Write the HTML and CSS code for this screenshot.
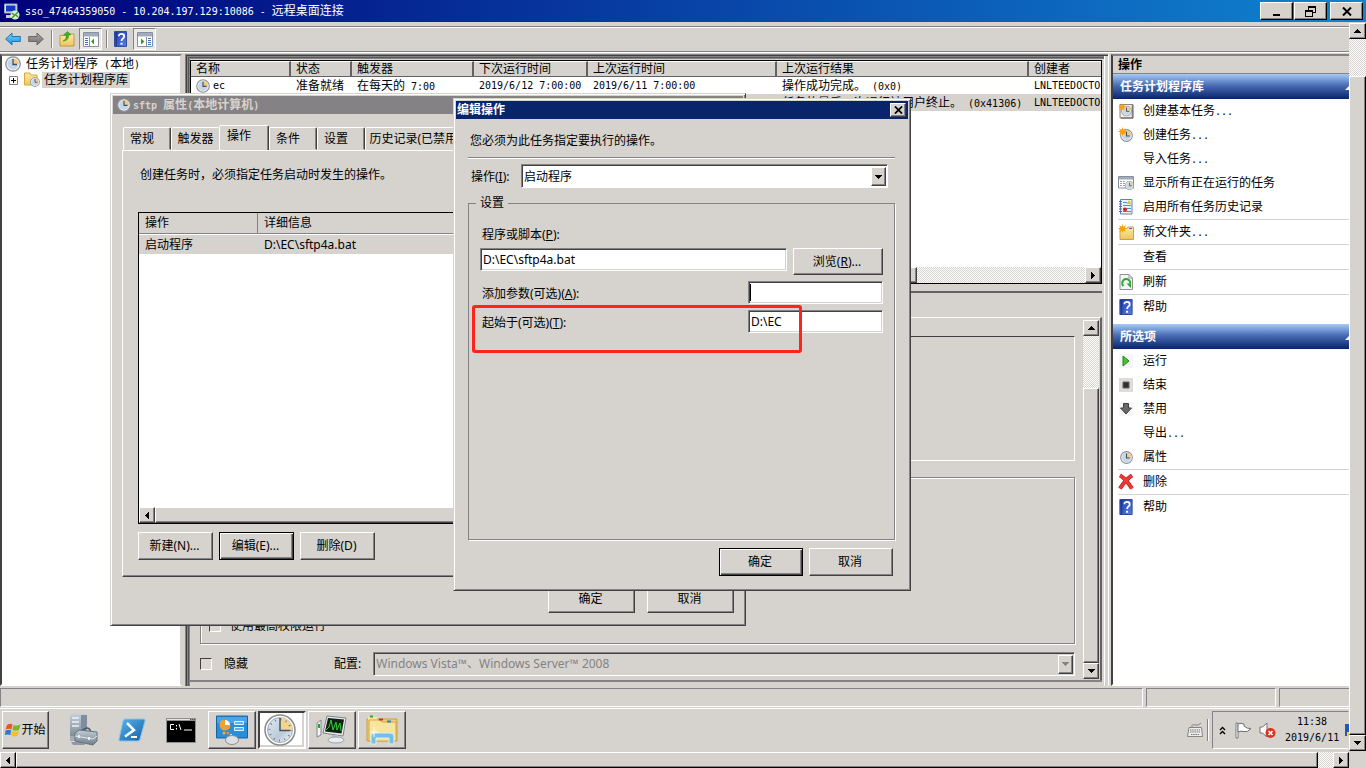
FILE: index.html
```html
<!DOCTYPE html>
<html lang="zh-CN">
<head>
<meta charset="utf-8">
<title>远程桌面连接</title>
<link rel="stylesheet" href="styles.css">
</head>
<body>
<svg class="defs" aria-hidden="true">
  <defs>
    <linearGradient id="blueG" x1="0" y1="0" x2="0" y2="1"><stop offset="0" stop-color="#7fd0f8"/><stop offset="1" stop-color="#1c8fdc"/></linearGradient>
    <linearGradient id="grayG" x1="0" y1="0" x2="0" y2="1"><stop offset="0" stop-color="#a8a8a8"/><stop offset="1" stop-color="#6e6e6e"/></linearGradient>
    <linearGradient id="helpG" x1="0" y1="0" x2="1" y2="1"><stop offset="0" stop-color="#1c3ca8"/><stop offset="1" stop-color="#5a80e4"/></linearGradient>
    <linearGradient id="foldG" x1="0" y1="0" x2="0" y2="1"><stop offset="0" stop-color="#fdeaa0"/><stop offset="1" stop-color="#ecc660"/></linearGradient>
    <linearGradient id="faceG" x1="0" y1="0" x2="1" y2="1"><stop offset="0" stop-color="#dfe9f2"/><stop offset="0.6" stop-color="#bccbd9"/><stop offset="1" stop-color="#f4f8fb"/></linearGradient>
    <linearGradient id="psG" x1="0" y1="0" x2="1" y2="1"><stop offset="0" stop-color="#5ab4ea"/><stop offset="1" stop-color="#1260a8"/></linearGradient>
    <linearGradient id="steelG" x1="0" y1="0" x2="0" y2="1"><stop offset="0" stop-color="#c3ced6"/><stop offset="1" stop-color="#6f7f8b"/></linearGradient>
    <symbol id="clock" viewBox="0 0 16 16">
      <circle cx="8" cy="8" r="7.2" fill="#f2f5f8" stroke="#8d8f92" stroke-width="1.3"/>
      <circle cx="8" cy="8" r="5.6" fill="#c5d6e6"/>
      <path d="M8 8V2.4A5.6 5.6 0 0 1 13.6 8Z" fill="#f4ca78"/>
      <path d="M8 3V8.5H12" fill="none" stroke="#39506e" stroke-width="1.3"/>
    </symbol>
    <symbol id="star" viewBox="0 0 10 10"><path d="M5 0 6 3 9 1.500 7.500 4 10 5 7.500 6 8.500 9 6 7.500 5 10 4 7.500 1.500 9 2.500 6 0 5 2.500 4 1 1.500 4 3Z" fill="#f8a010"/></symbol>
    <symbol id="help" viewBox="0 0 14 17"><path d="M0.500 0.500H13.500V16.500H0.500Z" fill="url(#helpG)" stroke="#23409c"/><path d="M2.500 1V16" stroke="#183080"/><path d="M5.200 5.500C5.200 2 11 2.200 11 5.500C11 7.800 8.100 8 8.100 10.700" fill="none" stroke="#fff" stroke-width="1.900"/><path d="M7 12.500H9.200V14.600H7Z" fill="#fff"/></symbol>
    <symbol id="up" viewBox="0 0 7 4"><path d="M3 0H4V1H5V2H6V3H7V4H0V3H1V2H2V1H3Z"/></symbol>
    <symbol id="down" viewBox="0 0 7 4"><path d="M0 0H7V1H6V2H5V3H4V4H3V3H2V2H1V1H0Z"/></symbol>
    <symbol id="left" viewBox="0 0 4 7"><path d="M4 0V7H3V6H2V5H1V4H0V3H1V2H2V1H3V0Z"/></symbol>
    <symbol id="right" viewBox="0 0 4 7"><path d="M0 0V7H1V6H2V5H3V4H4V3H3V2H2V1H1V0Z"/></symbol>
    <symbol id="cross" viewBox="0 0 10 9"><path d="M1 0.500 9 8.500M9 0.500 1 8.500" stroke="#000" stroke-width="2"/></symbol>
  </defs>
</svg>

<header class="rdp-title">
  <svg width="16" height="17" viewBox="0 0 16 17"><path d="M0.500 1H13V10H0.500Z" fill="#e4e8f0" stroke="#98a4b8"/><path d="M2 2.500H11.500V8.500H2Z" fill="#1438c0"/><path d="M2 15V12H8V15Z" fill="#c8ccd4"/><circle cx="11" cy="12" r="4.500" fill="#e0ecd8"/><path d="M8 10 10.500 12.500 8 15M14 9 11.500 11.500 14 14" fill="none" stroke="#2c9c24" stroke-width="1.400"/></svg>
  <h1><span class="mono">sso_47464359050 - 10.204.197.129:10086 - </span>远程桌面连接</h1>
  <button class="raised" aria-label="最小化"><svg width="8" height="10"><path d="M0 8H7V10H0Z"/></svg></button>
  <button class="raised" aria-label="还原"><svg width="11" height="11"><path d="M3 0H11V7H8V6H10V2H4V4H3ZM0 4H8V11H0ZM1 6V10H7V6Z" fill-rule="evenodd"/></svg></button>
  <button class="raised close" aria-label="关闭"><svg width="10" height="9"><use href="#cross"/></svg></button>
</header>

<div class="viewport">
<main class="session">
  <nav class="toolbar">
    <button aria-label="后退"><svg width="16" height="14" viewBox="0 0 16 14"><path d="M0.700 7 7 1V4.500H15.300V9.500H7V13Z" fill="url(#blueG)" stroke="#1876b4"/></svg></button>
    <button class="fwd" aria-label="前进"><svg width="16" height="14" viewBox="0 0 16 14"><path d="M15.300 7 9 1V4.500H0.700V9.500H9V13Z" fill="url(#grayG)" stroke="#686868"/></svg></button>
    <i class="bar"></i>
    <button aria-label="向上"><svg width="16" height="16" viewBox="0 0 16 16"><path d="M1 4.500H8L9 3H15V15H1Z" fill="url(#foldG)" stroke="#c09840"/><path d="M4 10C7 9 7.500 6 7 4H4.500L8.500 0.500 12 4H9.500C10 7 8 10 4 10Z" fill="#40b020" stroke="#2c8414" stroke-width=".5"/></svg></button>
    <button class="on" aria-label="显示树"><svg width="16" height="15" viewBox="0 0 16 15"><path d="M0.500 0.500H15.500V14.500H0.500Z" fill="#fff" stroke="#8890a0"/><path d="M1 1H15V4.500H1Z" fill="#a0acbc"/><path d="M2 6.500H5M2 8.500H5M2 10.500H5M2 12.500H5" stroke="#3c70b8"/><path d="M6.500 5V14" stroke="#8890a0"/><path d="M11 6.500V12.500L8 9.500Z" fill="#30a020"/></svg></button>
    <i class="bar"></i>
    <button class="q" aria-label="帮助"><svg width="13" height="16"><use href="#help"/></svg></button>
    <button class="on" aria-label="显示操作窗格"><svg width="16" height="15" viewBox="0 0 16 15"><path d="M0.500 0.500H15.500V14.500H0.500Z" fill="#fff" stroke="#8890a0"/><path d="M1 1H15V4.500H1Z" fill="#a0acbc"/><path d="M11 6.500H14M11 8.500H14M11 10.500H14M11 12.500H14" stroke="#3c70b8"/><path d="M9.500 5V14" stroke="#8890a0"/><path d="M4 6.500V12.500L7.500 9.500Z" fill="#30a020"/></svg></button>
  </nav>

  <div class="panes">
    <aside class="tree">
      <div class="node"><svg width="16" height="16"><use href="#clock"/></svg><span>任务计划程序<b class="mono"> (</b>本地<b class="mono">)</b></span></div>
      <div class="node child"><svg width="9" height="9" viewBox="0 0 9 9"><path d="M0.500 0.500H8.500V8.500H0.500Z" fill="#fff" stroke="#848284"/><path d="M2 4.500H7M4.500 2V7" stroke="#000"/></svg><svg class="ico" width="16" height="16" viewBox="0 0 16 16"><path d="M0.500 1H6L7 3H13V13H0.500Z" fill="url(#foldG)" stroke="#d8a840"/><svg x="6" y="5" width="10" height="10"><use href="#clock"/></svg></svg><span class="sel">任务计划程序库</span></div>
    </aside>

    <section class="center">
      <div class="list">
        <table>
          <colgroup><col class="c1"><col class="c2"><col class="c3"><col class="c4"><col class="c5"><col class="c6"><col></colgroup>
          <thead><tr><th>名称</th><th>状态</th><th>触发器</th><th>下次运行时间</th><th>上次运行时间</th><th>上次运行结果</th><th>创建者</th></tr></thead>
          <tbody>
            <tr><td><div class="name"><svg width="14" height="14"><use href="#clock"/></svg><span class="mono">ec</span></div></td><td>准备就绪</td><td>在每天的<span class="mono"> 7:00</span></td><td class="mono">2019/6/12 7:00:00</td><td class="mono">2019/6/11 7:00:00</td><td>操作成功完成。<span class="mono"> (0x0)</span></td><td class="mono">LNLTEEDOCTO</td></tr>
            <tr class="picked"><td><div class="name"><svg width="14" height="14"><use href="#clock"/></svg></div></td><td></td><td></td><td></td><td></td><td>任务的最后一次运行被用户终止。<span class="mono"> (0x41306)</span></td><td class="mono">LNLTEEDOCTO</td></tr>
          </tbody>
        </table>
        <div class="hscroll"><button class="raised" aria-label="左"><svg width="4" height="7"><use href="#left"/></svg></button><div class="raised thumb part"></div><div class="track"></div><button class="raised" aria-label="右"><svg width="4" height="7"><use href="#right"/></svg></button></div>
      </div>
      <div class="detail">
        <div class="page">
          <div class="form">
            <div class="box first"></div>
            <div class="box second"><label class="check"><input type="checkbox" disabled>使用最高权限运行</label></div>
            <div class="conf"><label class="check"><input type="checkbox" disabled>隐藏</label><label class="lab" for="conf">配置:</label><div class="combo off"><select id="conf" disabled><option>Windows Vista™、Windows Server™ 2008</option></select><i class="raised"><svg width="7" height="4"><use href="#down"/></svg></i></div></div>
          </div>
          <div class="vscroll"><button class="raised" aria-label="上"><svg width="7" height="4"><use href="#up"/></svg></button><div class="track gap"></div><div class="raised thumb"></div><button class="raised" aria-label="下"><svg width="7" height="4"><use href="#down"/></svg></button></div>
        </div>
      </div>
    </section>

    <aside class="actions">
      <h2>操作</h2>
      <h3>任务计划程序库<svg width="8" height="6"><path d="M0 6 6 0 8 2V6Z" fill="#fff"/></svg></h3>
      <ul>
        <li><svg width="16" height="16" viewBox="0 0 16 16"><path d="M2 1.500H15V15H2Z" fill="#eee" stroke="#8a8484"/><path d="M14.500 2V15H3" fill="none" stroke="#807878" stroke-width="1.500"/><svg x="3" y="2.500" width="11" height="11"><use href="#clock"/></svg><svg width="8" height="8"><use href="#star"/></svg></svg><span>创建基本任务<span class="mono">...</span></span></li>
        <li><svg width="16" height="16" viewBox="0 0 16 16"><svg x="2" y="2" width="13" height="13"><use href="#clock"/></svg><svg width="9" height="9"><use href="#star"/></svg></svg><span>创建任务<span class="mono">...</span></span></li>
        <li class="plain"><span>导入任务<span class="mono">...</span></span></li>
        <li><svg width="16" height="16" viewBox="0 0 16 16"><path d="M0.500 1.500H15.500V13H0.500Z" fill="#fff" stroke="#8890a0"/><path d="M1 2H15V4.500H1Z" fill="#a0acbc"/><path d="M2 6.500H8M2 8.500H7M2 10.500H7" stroke="#a0a0b0" stroke-dasharray="2 1"/><svg x="7" y="6" width="9" height="9"><use href="#clock"/></svg></svg>显示所有正在运行的任务</li>
        <li><svg width="16" height="16" viewBox="0 0 16 16"><path d="M2.500 0.500H14V15H2.500Z" fill="#e8f2fc" stroke="#5c84b8"/><path d="M1 2.500H4M1 5H4M1 7.500H4M1 10H4M1 12.500H4" stroke="#606878"/><path d="M5 3.500H9M5 6.500H13M5 9.500H13M5 12.500H13" stroke="#4c90d8"/><path d="M8.500 5 11 1 13.500 5Z" fill="#f4c010"/><circle cx="7" cy="10.500" r="2" fill="#d42020"/></svg>启用所有任务历史记录</li>
        <li class="line"><svg width="16" height="16" viewBox="0 0 16 16"><path d="M2 4.500H9L10 3H15.500V15.500H2Z" fill="url(#foldG)" stroke="#d0a040"/><path d="M11 4.500H14" stroke="#3878d0"/><svg width="9" height="9"><use href="#star"/></svg></svg><span>新文件夹<span class="mono">...</span></span></li>
        <li class="line plain">查看</li>
        <li class="line"><svg width="16" height="16" viewBox="0 0 16 16"><path d="M2 0.500H11L14.500 4V15.500H2Z" fill="#f4f6f8" stroke="#909090"/><path d="M11 0.500V4H14.500" fill="none" stroke="#a0a0a0"/><path d="M5.500 12A4 4 0 1 1 11 12" fill="none" stroke="#30a838" stroke-width="2"/><path d="M8.500 9.500H13V14Z" fill="#30a838"/></svg>刷新</li>
        <li class="line"><svg width="16" height="16"><use href="#help"/></svg>帮助</li>
      </ul>
      <h3>所选项<svg width="8" height="6"><path d="M0 6 6 0 8 2V6Z" fill="#fff"/></svg></h3>
      <ul>
        <li><svg width="16" height="16" viewBox="0 0 16 16"><path d="M1 1H15V15H1Z" fill="#f6f6f6"/><path d="M5 3V13L11 8Z" fill="#48c030" stroke="#208c18"/></svg>运行</li>
        <li><svg width="16" height="16" viewBox="0 0 16 16"><path d="M1 1H15V15H1Z" fill="#dedcda"/><path d="M5 5H11V11H5Z" fill="#303030" stroke="#606060"/></svg>结束</li>
        <li><svg width="16" height="16" viewBox="0 0 16 16"><path d="M1 1H15V15H1Z" fill="#f6f6f6"/><path d="M5.500 2.500H10.500V7H13.500L8 13 2.500 7H5.500Z" fill="#686868" stroke="#404040"/></svg>禁用</li>
        <li class="plain"><span>导出<span class="mono">...</span></span></li>
        <li><svg width="16" height="16" viewBox="0 0 16 16"><svg x="2" y="2" width="13" height="13"><use href="#clock"/></svg></svg>属性</li>
        <li class="line"><svg width="16" height="16" viewBox="0 0 16 16"><path d="M2 1.500Q7 4 14 14.500M14 1.500Q8 5 2 14.500" fill="none" stroke="#a81414" stroke-width="4"/><path d="M2 1.500Q7 4 14 14.500M14 1.500Q8 5 2 14.500" fill="none" stroke="#f03838" stroke-width="2.800"/></svg>删除</li>
        <li class="line"><svg width="16" height="16"><use href="#help"/></svg>帮助</li>
      </ul>
    </aside>
  </div>

  <div class="status"><i></i><i></i><i></i></div>

  <footer class="taskbar">
    <button class="raised start"><svg width="16" height="14" viewBox="0 0 16 14"><path d="M2 2Q5 0 7.500 1.500L6.500 6.500Q4 5 0.500 6.500Z" fill="#e85820"/><path d="M8.500 2Q11 3.500 15.500 1.500L14 7Q11 8.500 7.500 7Z" fill="#78b828"/><path d="M0.500 7.500Q4 6 6.300 7.500L5.300 12Q3 11 0 12Z" fill="#3078d0"/><path d="M7.300 8Q10.500 9.500 13.800 8L12.500 13Q9 14 6 12.500Z" fill="#f4c020"/></svg>开始</button>
    <button class="quick" aria-label="服务器管理器"><svg width="32" height="32" viewBox="0 0 32 32"><path d="M3 2 5 0H20V25L18 27H3Z" fill="url(#steelG)"/><path d="M14 1H20V24H14Z" fill="#7d8f9e"/><path d="M5 4H12M5 8H12M5 12H12" stroke="#eef4f8" stroke-width="1.500"/><path d="M3 22H17V27H3Z" fill="#a3adb5"/><path d="M4 28H16L18 31H6Z" fill="#8d9aa5"/><path d="M14 18Q21 10 24 18" fill="none" stroke="#4d5861" stroke-width="1.500"/><path d="M8 19 12 16 30 18V27L26 31 8 27Z" fill="url(#steelG)" stroke="#63717d"/><path d="M8 22 26 25 30 22" fill="none" stroke="#e0e6ea"/><path d="M12 21V24M22 23V26" stroke="#e8ecef" stroke-width="2"/></svg></button>
    <button class="quick" aria-label="PowerShell"><svg width="28" height="24" viewBox="0 0 28 24"><path d="M7 1H26Q27.500 1 27 3L22 21Q21.500 23 20 23H2Q0.500 23 1 21L5 3Q5.500 1 7 1Z" fill="url(#psG)" stroke="#8cc4ec"/><path d="M9 5 16 12 7 18.500" fill="none" stroke="#fff" stroke-width="2.500"/><path d="M13 19H19" stroke="#fff" stroke-width="2"/></svg></button>
    <button class="quick" aria-label="命令提示符"><svg width="30" height="25" viewBox="0 0 30 25"><path d="M0 0H30V25H0Z" fill="#909090"/><path d="M1 3H29V24H1Z"/><path d="M1 1H24V2H1Z" fill="#e4e4e4"/><path d="M24 1.500H29" stroke="#505050" stroke-dasharray="1 1"/><path d="M8 6.500H4.500V11.500H8M10.500 7V8.500M10.500 10V11.500M13 6 15 12M18 12H26" fill="none" stroke="#fff"/></svg></button>
    <button class="raised task" aria-label="控制面板"><svg width="32" height="30" viewBox="0 0 32 30"><path d="M0.500 1H31.500V23H0.500Z" fill="#2c8cd4" stroke="#1464a4"/><path d="M1 2H31V8H1Z" fill="#4ca4e4"/><circle cx="9" cy="10" r="5" fill="#fff"/><path d="M9 10V4.500A5.500 5.500 0 1 0 14.500 10Z" fill="#f0a030"/><path d="M18.500 6.500H27.500V9.500H18.500ZM18.500 12.500H27.500V15.500H18.500Z" fill="#58b4f0" stroke="#e4f4ff"/><circle cx="8" cy="18" r="1.500" fill="#f0b040"/><circle cx="12" cy="18" r="1.500" fill="#e8884c"/><path d="M15 19V24" stroke="#ddd" stroke-width="2"/><ellipse cx="16" cy="25" rx="6.500" ry="4.500" fill="#dde0e2" stroke="#888c90"/></svg></button>
    <button class="pressed task" aria-label="任务计划程序"><svg width="32" height="32" viewBox="0 0 32 32"><circle cx="16" cy="16" r="15" fill="#fff" stroke="#888c90" stroke-width="1.500"/><circle cx="16" cy="16" r="12.500" fill="url(#faceG)" stroke="#a4acb4"/><path d="M16 16V3.500A12.500 12.500 0 0 1 28.500 16Z" fill="#f4d490"/><circle cx="16" cy="16" r="10.500" fill="none" stroke="#65788c" stroke-width="2" stroke-dasharray="1 4.500"/><path d="M16 4V16.500H26" fill="none" stroke="#44586c" stroke-width="1.500"/></svg></button>
    <button class="raised task" aria-label="资源监视器"><svg width="32" height="30" viewBox="0 0 32 30"><path d="M1 8 5 5V20L1 22Z" fill="#f4f4f4" stroke="#80868c"/><path d="M3 9V13" stroke="#2ca020" stroke-width="2"/><path d="M11 1 30 3 27 21 7 18Z" fill="#e8ecf0" stroke="#7c848c"/><path d="M12 3 28 4.500 25.500 18.500 9 16.500Z" fill="#102010"/><path d="M10 15 13 12 15 5 17 15 20 7 21 15 24 8 25 16" fill="none" stroke="#28d038"/><path d="M16 20H22V24H16Z" fill="#b4bcc4"/><ellipse cx="20" cy="25" rx="8" ry="3" fill="#e8ecf0" stroke="#9ca4ac"/></svg></button>
    <button class="raised task" aria-label="资源管理器"><svg width="32" height="30" viewBox="0 0 32 30"><path d="M1 4H31V26H1Z" fill="#f0cf70" stroke="#c8a040"/><path d="M2 2H11V5H2Z" fill="#f8e49c"/><path d="M4 1.500H7" stroke="#30a030" stroke-width="2"/><path d="M3 5H14L16 7H30V26H3Z" fill="#f8e49c" stroke="#d0a848"/><path d="M13 4.500H17" stroke="#d83020" stroke-width="2"/><path d="M21 6.500H25" stroke="#3080d0" stroke-width="2"/><path d="M5 29V21Q5 18 9 18H24Q28 18 28 21V29H23V23H10V29Z" fill="#74bfe8" stroke="#d4f0fc"/><path d="M8 12V22M4 17H12" stroke="#fff"/></svg></button>
    <div class="spacer"></div>
    <svg class="kbd" width="16" height="16" viewBox="0 0 16 16"><path d="M5 5Q4 2 8 3Q11 4 14 1" fill="none" stroke="#848484"/><path d="M2 5.500H14.500L15.500 14.500H0.500Z" fill="#f0eeec" stroke="#848484"/><path d="M3 8H13M3 10H13M4 12.500H12" stroke="#747474" stroke-width="1.200" stroke-dasharray="1.500 .7"/></svg>
    <i class="bar"></i>
    <div class="tray">
      <svg width="7" height="9" viewBox="0 0 7 9"><path d="M1 4 3.500 1.500 6 4M1 8 3.500 5.500 6 8" fill="none" stroke="#000" stroke-width="1.400"/></svg>
      <svg class="flag" width="17" height="17" viewBox="0 0 17 17"><path d="M1 1H3V16H1Z" fill="#fff" stroke="#606060" stroke-width=".8"/><path d="M3 2Q6 0.500 9 2V4Q12 7 16 6.500Q12 11 9 9.500Q6 8.500 3 10Z" fill="#fff" stroke="#707070"/></svg>
      <svg class="vol" width="17" height="17" viewBox="0 0 17 17"><path d="M1 5H3.500L8 1V15L3.500 11H1Z" fill="#fff" stroke="#707070"/><circle cx="11.500" cy="11" r="5" fill="#e03020"/><path d="M9.500 9 13.500 13M13.500 9 9.500 13" stroke="#fff" stroke-width="1.600"/></svg>
      <div class="time mono"><span>11:38</span><span>2019/6/11</span></div>
      <svg class="edge" width="5" height="12"><path d="M0 0H5V12H0Z" fill="#2458b8"/><path d="M2 8H5V12H2Z" fill="#f0d020"/></svg>
    </div>
  </footer>

  <section class="dialog props">
    <h2><svg width="14" height="14"><use href="#clock"/></svg><span><span class="mono">sftp </span>属性<span class="mono">(</span>本地计算机<span class="mono">)</span></span></h2>
    <div class="tabs"><button>常规</button><button>触发器</button><button class="active">操作</button><button>条件</button><button>设置</button><button class="wide">历史记录(已禁用)</button></div>
    <div class="sheet">
      <p>创建任务时，必须指定任务启动时发生的操作。</p>
      <div class="acts">
        <table><thead><tr><th>操作</th><th>详细信息</th></tr></thead><tbody><tr><td>启动程序</td><td>D:\EC\sftp4a.bat</td></tr></tbody></table>
        <div class="hscroll"><button class="raised" aria-label="左"><svg width="4" height="7"><use href="#left"/></svg></button><div class="raised thumb grow"></div></div>
      </div>
      <div class="row"><button class="raised">新建(N)...</button><button class="raised default">编辑(E)...</button><button class="raised">删除(D)</button></div>
    </div>
    <div class="foot"><button class="raised">确定</button><button class="raised">取消</button></div>
  </section>

  <section class="dialog edit">
    <h2>编辑操作<button class="raised" aria-label="关闭"><svg width="9" height="8"><use href="#cross"/></svg></button></h2>
    <p>您必须为此任务指定要执行的操作。</p>
    <hr>
    <div class="line1"><label for="act">操作(<u>I</u>):</label><div class="combo"><select id="act"><option>启动程序</option></select><i class="raised"><svg width="7" height="4"><use href="#down"/></svg></i></div></div>
    <fieldset>
      <legend>设置</legend>
      <label for="prog">程序或脚本(<u>P</u>):</label>
      <div class="line2"><input id="prog" type="text" value="D:\EC\sftp4a.bat"><button class="raised">浏览(<u>R</u>)...</button></div>
      <div class="line3"><label for="args">添加参数(可选)(<u>A</u>):</label><span class="caret"><input id="args" type="text"></span></div>
      <div class="line3"><label for="dir">起始于(可选)(<u>T</u>):</label><input id="dir" type="text" value="D:\EC"></div>
    </fieldset>
    <div class="foot"><button class="raised default">确定</button><button class="raised">取消</button></div>
    <div class="marker"></div>
  </section>
</main>
<div class="vscroll outer"><button class="raised" aria-label="上"><svg width="7" height="4"><use href="#up"/></svg></button><div class="track gap"></div><div class="raised thumb"></div><button class="raised" aria-label="下"><svg width="7" height="4"><use href="#down"/></svg></button></div>
</div>
<div class="hscroll outer"><button class="raised" aria-label="左"><svg width="4" height="7"><use href="#left"/></svg></button><div class="raised thumb grow"></div><div class="track"></div><button class="raised" aria-label="右"><svg width="4" height="7"><use href="#right"/></svg></button></div>
</body>
</html>
```
FILE: styles.css
```css
* { box-sizing: border-box; }
:root { --face: #d6d3ce; --mid: #848284; --dark: #424142; }
body { margin: 0; height: 100vh; overflow: hidden; display: flex; flex-direction: column; background: var(--face); color: #000; font: 12px/16px "Noto Sans", "Noto Sans CJK SC", sans-serif; }
.defs { position: absolute; width: 0; height: 0; }
h1, h2, h3, p, ul { margin: 0; padding: 0; font-size: 12px; font-weight: normal; }
svg { display: block; flex: none; }
button, input, select { font: inherit; color: inherit; margin: 0; border-radius: 0; }
button { display: flex; align-items: center; justify-content: center; padding: 0; border: 0; background: none; flex: none; }
.mono { font-family: "DejaVu Sans Mono", "Noto Sans CJK SC", monospace; font-size: 10px; white-space: pre; }
b.mono { font-weight: normal; }
.raised { background: var(--face); border: 1px solid; border-color: #fff var(--dark) var(--dark) #fff; box-shadow: inset -1px -1px var(--mid); }
.bar { width: 2px; height: 18px; border-left: 1px solid var(--mid); border-right: 1px solid #fff; }
.track { flex: 1; background: repeating-conic-gradient(#fff 0 25%, var(--face) 0 50%) 0 0 / 2px 2px; }

.rdp-title { height: 22px; flex: none; display: flex; align-items: center; padding: 0 3px 0 4px; background: linear-gradient(90deg, #00007b, #1084d0); color: #fff; }
.rdp-title h1 { flex: 1; margin-left: 5px; white-space: pre; }
.rdp-title button { width: 33px; height: 18px; margin-left: 1px; border-right-color: #000; border-bottom-color: #000; }
.rdp-title .close { margin-left: 3px; }

.viewport { flex: 1; display: flex; min-height: 0; }
.session { flex: 1; min-width: 0; position: relative; overflow: hidden; display: flex; flex-direction: column; }
.vscroll { display: flex; flex-direction: column; width: 16px; flex: none; }
.vscroll button { height: 16px; }
.vscroll .gap { flex: 0 0 52px; }
.vscroll .thumb { flex: 1; }
.hscroll { display: flex; height: 16px; flex: none; }
.hscroll button { width: 16px; }
.hscroll .part { flex: 0 0 710px; }
.hscroll .grow { flex: 1; }
.vscroll.outer { width: 17px; padding-top: 1px; }
.vscroll.outer .gap { flex-basis: 37px; }
.hscroll.outer { height: 17px; padding-top: 1px; margin-right: 17px; }
.hscroll.outer .track { flex: 0 0 15px; }
.outer .raised { border-right-color: #000; border-bottom-color: #000; }

.toolbar { height: 26px; flex: none; margin: 4px 0 2px; padding-left: 5px; display: flex; align-items: center; border-top: 1px solid var(--mid); border-bottom: 1px solid var(--mid); box-shadow: inset 0 1px #fff, 0 1px #fff; }
.toolbar .fwd { margin: 0 7px; }
.toolbar .bar { margin-right: 6px; }
.toolbar .on { width: 23px; height: 22px; margin: 0 4px; border: 1px solid; border-color: var(--mid) #fff #fff var(--mid); background: #ebe9e7; }
.toolbar .q { margin-right: 2px; }

.panes { flex: 1; min-height: 0; display: flex; }
.tree, .actions { background: #fff; border: 2px solid; border-color: var(--mid) var(--face) #fff var(--dark); }
.tree { width: 182px; flex: none; margin-right: 3px; padding-left: 3px; }
.node { display: flex; align-items: center; height: 16px; }
.node span { margin-left: 5px; white-space: pre; }
.node.child { padding-left: 4px; }
.node .ico { margin-left: 6px; }
.node .sel { background: var(--face); margin-left: 2px; padding: 0 2px; }

.center { flex: 1; min-width: 0; display: flex; flex-direction: column; padding: 6px 6px 4px 5px; border-right: 1px solid #fff; box-shadow: inset 1px 1px var(--mid), inset 2px 2px var(--dark), inset -3px 0 var(--face), inset -4px 0 #fff, inset 3px 3px var(--mid), inset 4px 4px #5a595a, inset 5px 5px var(--mid); }
.list { flex: 0 0 224px; display: flex; flex-direction: column; border: 1px solid #000; background: #fff; }
table { border-collapse: separate; border-spacing: 0; table-layout: fixed; width: 100%; }
th, td { font-weight: normal; text-align: left; white-space: nowrap; overflow: hidden; padding: 0 0 0 6px; }
.list table { margin-bottom: auto; }
.list th { height: 16px; line-height: 14px; background: var(--face); border-right: 2px solid #636163; border-bottom: 1px solid #636163; border-top: 1px solid #fff; padding-left: 5px; }
.list th:last-child { border-right: 0; }
.list td { height: 17px; line-height: 17px; padding-left: 5px; }
.list td.mono { white-space: pre; }
.list td > .mono { line-height: 1; }
.c1 { width: 100px; } .c2 { width: 61px; } .c3 { width: 122px; } .c4 { width: 114px; } .c5 { width: 189px; } .c6 { width: 252px; }
.name { display: flex; align-items: center; gap: 3px; height: 17px; }
.picked { background: var(--face); }

.detail { flex: 1; min-height: 0; margin-top: 7px; padding: 24px 0 0 4px; background: var(--face); border-top: 2px solid #636163; border-bottom: 2px solid var(--mid); }
.page { height: 100%; display: flex; border-top: 1px solid #fff; border-right: 2px solid #636163; padding: 2px 1px 1px 0; }
.form { flex: 1; display: flex; flex-direction: column; padding: 16px 8px 4px 6px; }
.box { border: 1px solid var(--mid); box-shadow: 1px 1px #fff, inset 1px 1px #fff; }
.first { flex: 0 0 125px; margin-bottom: 16px; border-top-color: var(--dark); border-right-color: #fff; border-bottom-color: #fff; box-shadow: none; }
.second { flex: 1; display: flex; align-items: flex-end; padding: 0 0 9px 8px; }
.check { display: flex; align-items: center; gap: 12px; }
.second .check { gap: 9px; }
.check input { appearance: none; width: 12px; height: 12px; background: #ddd6d2; border: 1px solid; border-color: var(--dark) #fff #fff var(--dark); }
.conf { display: flex; align-items: center; margin-top: 8px; height: 23px; }
.conf .lab { margin: 0 12px 0 86px; }
.combo { flex: 1; display: flex; height: 24px; background: #fff; border: 1px solid; border-color: var(--mid) #fff #fff var(--mid); box-shadow: inset 1px 1px var(--dark); padding: 2px 1px 1px 2px; }
.combo select { flex: 1; min-width: 0; appearance: none; border: 0; padding: 0; background: none; outline: 0; opacity: 1; }
.combo i { width: 15px; display: flex; align-items: center; justify-content: center; }
.combo.off { background: var(--face); color: var(--mid); fill: var(--mid); }

.actions { width: 238px; flex: none; margin-left: 2px; border-right: 0; }
.actions h2 { height: 18px; background: var(--face); padding-left: 5px; line-height: 17px; font-weight: bold; border-bottom: 1px solid var(--mid); }
.actions h3 { height: 25px; display: flex; align-items: center; justify-content: space-between; padding-left: 7px; color: #fff; font-weight: bold; background: linear-gradient(#a5cbf7, #4a6db5 45%, #08246b); overflow: hidden; }
.actions h3 svg { margin-right: -4px; }
.actions ul { list-style: none; margin: 0 0 5px; padding-left: 5px; }
.actions li { height: 24px; display: flex; align-items: center; gap: 9px; }
.actions .line { height: 25px; border-top: 1px solid var(--face); }
.actions .plain { padding-left: 25px; }

.status { flex: none; height: 19px; display: flex; gap: 3px; margin-top: 2px; }
.status i { border: 1px solid; border-color: var(--mid) #fff #fff var(--mid); flex: 0 0 130px; }
.status i:first-child { flex: 1; }
.status i:last-child { flex: 0 0 70px; border-right: 0; }
.taskbar { flex: none; height: 43px; margin-top: 1px; border-top: 1px solid #fff; padding: 2px 0 2px 2px; display: flex; align-items: center; }
.start { width: 47px; height: 38px; margin-right: 9px; }
.quick { width: 49px; height: 38px; }
.task { width: 48px; height: 38px; margin-right: 2px; }
.quick + .task { margin-left: 3px; }
.pressed { background: #fff; border: 2px solid; border-color: var(--dark) #fff #fff var(--dark); box-shadow: inset -2px -2px var(--face); padding-right: 4px; }
.spacer { flex: 1; }
.taskbar .bar { height: 22px; margin: 0 3px 0 4px; }
.tray { display: flex; align-items: center; height: 38px; width: 137px; border: 1px solid; border-color: var(--mid) transparent #fff var(--mid); padding-left: 6px; }
.flag { margin-left: 9px; }
.vol { margin-left: 7px; }
.time { margin-left: 9px; display: flex; flex-direction: column; align-items: center; }
.edge { margin-left: 6px; }

.dialog { position: absolute; background: var(--face); border: 1px solid; border-color: var(--face) var(--dark) var(--dark) var(--face); box-shadow: inset 1px 1px #fff, inset -1px -1px var(--mid); padding: 2px; display: flex; flex-direction: column; }
.dialog h2 { height: 18px; flex: none; display: flex; align-items: center; font-weight: bold; color: #fff; }
.dialog .raised.default { border-color: #000; box-shadow: inset 1px 1px #fff, inset -1px -1px var(--dark), inset -2px -2px var(--mid); }
.props { left: 110px; top: 71px; width: 636px; height: 533px; }
.props h2 { background: var(--mid); color: var(--face); padding-left: 4px; gap: 2px; }
.tabs { display: flex; align-items: flex-end; margin: 11px 0 0 10px; height: 25px; flex: none; }
.tabs button { width: 48px; height: 23px; padding-right: 10px; border: 1px solid; border-color: #fff var(--dark) transparent #fff; border-radius: 2px 2px 0 0; box-shadow: inset -1px 0 var(--mid); }
.tabs button:nth-child(2) { padding-right: 0; box-shadow: none; border-right: 0; }
.tabs .active { height: 26px; width: 50px; margin-bottom: -1px; padding-bottom: 5px; background: var(--face); }
.tabs .wide { width: 110px; }
.sheet { flex: 1; margin: 0 9px; padding: 16px 14px; display: flex; flex-direction: column; border: 1px solid; border-color: #fff var(--dark) var(--dark) #fff; box-shadow: inset -1px -1px var(--mid); }
.sheet p { margin-left: 3px; }
.acts { flex: 1; display: flex; flex-direction: column; margin: 29px 0 8px 1px; border: 1px solid #000; background: #fff; }
.acts table { margin-bottom: auto; }
.acts th { height: 21px; background: var(--face); border-right: 1px solid var(--mid); border-bottom: 1px solid var(--mid); }
.acts th:first-child { width: 119px; }
.acts td { height: 20px; background: var(--face); border-top: 1px solid #fff; }
.row { display: flex; gap: 6px; margin-left: 1px; }
.row button { width: 75px; height: 28px; padding-right: 2px; }
.dialog .foot { display: flex; justify-content: flex-end; }
.props .foot { gap: 12px; margin: 8px 9px 10px; }
.props .foot button { width: 87px; height: 28px; padding-right: 2px; }

.edit { left: 453px; top: 76px; width: 458px; height: 493px; }
.edit h2 { background: #08246b; justify-content: space-between; padding: 0 2px 0 1px; }
.edit h2 button { width: 16px; height: 14px; }
.edit p { margin: 14px 0 8px 14px; }
.edit hr { margin: 0 13px 0 12px; border: 0; height: 2px; border-top: 1px solid var(--mid); border-bottom: 1px solid #fff; flex: none; }
.line1 { display: flex; align-items: center; margin: 5px 20px 0 15px; }
.line1 label { width: 50px; padding-top: 2px; }
fieldset { flex: 1; min-width: 0; display: flex; flex-direction: column; margin: 7px 13px 8px 12px; padding: 16px 11px 0; border: 1px solid var(--mid); box-shadow: 1px 1px #fff; }
legend { padding: 0 4px; margin-left: -4px; }
fieldset > label { margin-left: 2px; }
input[type="text"] { height: 23px; width: 135px; padding: 0 2px 1px; background: #fff; border: 1px solid; border-color: var(--mid) #fff #fff var(--mid); box-shadow: inset 1px 1px var(--dark), inset -1px -1px var(--face); outline: 0; }
.line2 { display: flex; gap: 6px; margin-top: 5px; height: 27px; align-items: flex-start; }
.line2 input[type="text"] { flex: 1; }
.line2 button { width: 90px; height: 27px; padding-right: 2px; }
.line3 { display: flex; justify-content: space-between; align-items: center; margin-top: 6px; padding-left: 2px; height: 23px; }
.line3 label { padding-top: 3px; }
.caret { display: flex; position: relative; }
.caret::after { content: ""; position: absolute; left: 2px; top: 3px; width: 1px; height: 17px; background: #000; }
.edit .foot { gap: 6px; margin: 0 15px 12px; }
.edit .foot button { width: 84px; height: 28px; padding-right: 2px; }
.marker { position: absolute; left: 18px; top: 206px; width: 330px; height: 48px; border: 3px solid #ff2419; border-radius: 3px; }
```
